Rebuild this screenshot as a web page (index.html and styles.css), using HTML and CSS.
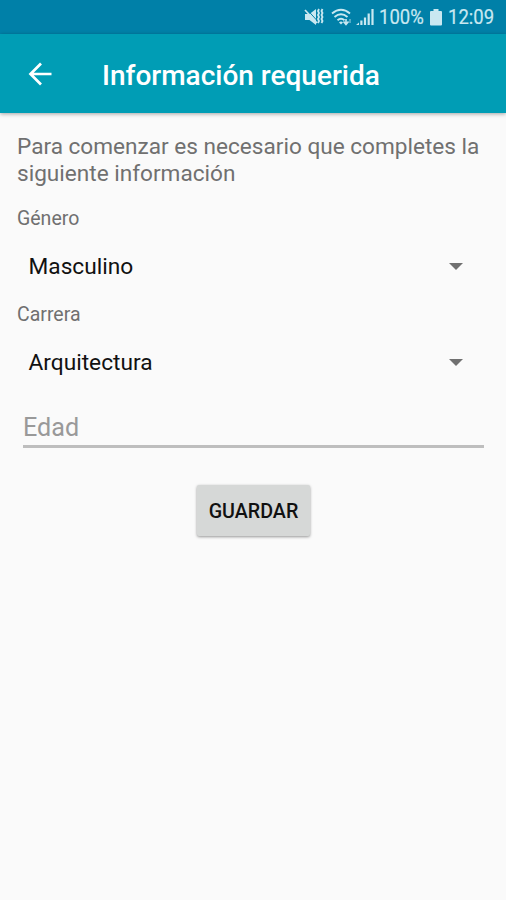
FILE: index.html
```
<!DOCTYPE html>
<html lang="es">
<head>
  <meta charset="UTF-8" />
  <title>Información requerida</title>
  <link rel="stylesheet" href="styles.css">
</head>
<body>
  <!-- Status bar -->
  <div class="status-bar">
    <svg class="icon-mute" width="20" height="20" viewBox="0 0 20 20">
      <path d="M1 7h4.500l6.500-5v16l-6.500-5H1z" fill="currentColor" />
      <path d="M3 2.500l10 11" stroke="#0080a8" stroke-width="1" />
      <path d="M1 3l12 13" stroke="currentColor" stroke-width="1.700" />
      <path d="M15 2l-1 2 1 2-1 2 1 2-1 2 1 2-1 2M18.500 2l-1 2 1 2-1 2 1 2-1 2 1 2-1 2" fill="none" stroke="currentColor" stroke-width="1.800" />
    </svg>
    <svg class="icon-wifi" width="21" height="20" viewBox="0 0 21 20">
      <path d="M1 6.500q9-7.500 18 0M3.500 10q6.500-5.500 13 0M6.500 13.200q3.500-3 7 0" fill="none" stroke="currentColor" stroke-width="1.900" />
      <path d="M8 15.500q2-2 4 0l-2 2z" fill="currentColor" />
      <path d="M15 12v5m-2.500-2.500l2.500 3 2.500-3" fill="none" stroke="currentColor" stroke-width="1.600" />
      <path d="M19 16v-4" stroke="currentColor" stroke-width="1.600" opacity="0.5" />
    </svg>
    <svg class="icon-signal" width="18" height="18" viewBox="0 0 18 18">
      <path d="M0 17l3-2.500V17zM4.300 12.500h2.200V17H4.300zM7.900 9.500h2.200V17H7.900zM11.600 5.500h2.200V17h-2.200zM15.400 1h2.200v16h-2.200z" fill="currentColor" />
    </svg>
    <span class="battery-level">100%</span>
    <svg class="icon-battery" width="12" height="18" viewBox="0 0 12 18">
      <path d="M3.500 1h5v2H11q1 0 1 1v12.500q0 1-1 1H1q-1 0-1-1V4q0-1 1-1h2.500z" fill="currentColor" />
    </svg>
    <span class="clock">12:09</span>
  </div>

  <!-- Toolbar -->
  <header class="toolbar">
    <svg class="back" width="24" height="24" viewBox="0 0 24 24">
      <path d="M23.500 12H3M13 1.500L2.500 12 13 22.500" fill="none" stroke="#fff" stroke-width="2.700" />
    </svg>
    <h1>Información requerida</h1>
  </header>

  <main>
    <p class="intro">Para comenzar es necesario que completes la siguiente información</p>

    <div class="label">Género</div>
    <div class="spinner">
      <span class="value">Masculino</span>
      <span class="arrow"></span>
    </div>

    <div class="label">Carrera</div>
    <div class="spinner">
      <span class="value">Arquitectura</span>
      <span class="arrow"></span>
    </div>

    <input type="text" class="age" placeholder="Edad" />

    <button class="save">GUARDAR</button>
  </main>
</body>
</html>
```

FILE: styles.css
```
* {
  box-sizing: border-box;
}

body {
  margin: 0;
  height: 100vh;
  background: #fafafa;
  font-family: Roboto, sans-serif;
  color: #707070;
  overflow: hidden;
}

/* Status bar */
.status-bar {
  height: 34px;
  background: #0080a8;
  color: #c9e8f1;
  display: flex;
  align-items: center;
  padding-left: 304px;
  font-size: 20.8px;
}

.status-bar svg {
  flex: none;
}

.icon-wifi {
  margin-left: 7px;
}

.icon-signal {
  margin-left: 4px;
}

/* the system font is narrower than the body one */
.battery-level,
.clock {
  flex: none;
  transform: scaleX(0.89);
  transform-origin: left;
  white-space: nowrap;
  -webkit-text-stroke: 0.2px currentColor;
}

.battery-level {
  width: 45px;
  margin-left: 5px;
}

.icon-battery {
  margin-left: 6px;
}

.clock {
  margin-left: 6px;
}

/* Toolbar */
.toolbar {
  height: 79px;
  background: #009db5;
  display: flex;
  align-items: center;
  padding-left: 28px;
  box-shadow: 0 1px 4px rgba(0, 0, 0, 0.35);
}

.toolbar h1 {
  margin: 3px 0 0 50px;
  color: #fff;
  font-size: 28px;
  font-weight: 500;
  white-space: nowrap;
}

/* Form */
main {
  display: flex;
  flex-direction: column;
  padding: 20px 17px 0;
}

.intro {
  margin: 0 -2px 20px 0;
  font-size: 22.6px;
  line-height: 27px;
}

.label {
  font-size: 19.5px;
  line-height: 23px;
}

.spinner {
  height: 73px;
  display: flex;
  align-items: center;
  justify-content: space-between;
  padding: 0 26px 1px 11.5px;
  color: #111;
  font-size: 22.7px;
}

.arrow {
  border: 7px solid transparent;
  border-top-color: #707070;
  border-bottom: 0;
}

.age {
  height: 45px;
  margin: 4px 5px 0 6px;
  padding: 7px 0 0;
  border: 0;
  border-bottom: 3px solid #bebebe;
  outline: none;
  background: none;
  font-family: inherit;
  font-size: 25.2px;
}

.age::placeholder {
  color: #999;
  opacity: 1;
}

.save {
  align-self: center;
  width: 113px;
  height: 51px;
  margin: 37px 0 0 1px;
  padding: 1px 0 0;
  border: 0;
  border-radius: 2px;
  background: #d6d8d7;
  box-shadow: 0 1px 3px rgba(0, 0, 0, 0.4);
  color: #111;
  font-family: inherit;
  font-size: 19.7px;
  font-weight: 500;
}
```
